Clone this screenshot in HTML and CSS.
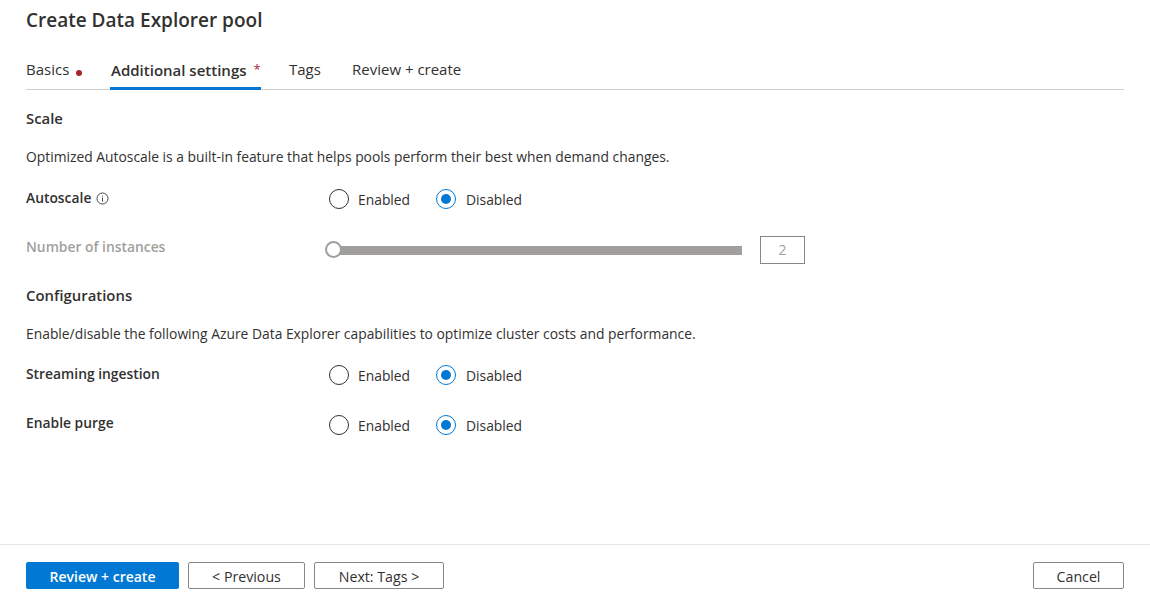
FILE: index.html
```html
<!DOCTYPE html>
<html lang="en">
<head>
  <meta charset="UTF-8">
  <title>Create Data Explorer pool</title>
  <link rel="stylesheet" href="styles.css">
</head>
<body>
  <div class="page">
    <main class="content">
      <h1 class="title">Create Data Explorer pool</h1>

      <nav class="tabs">
        <a class="tab tab-basics">Basics <span class="dot"></span></a>
        <a class="tab tab-active">Additional settings <span class="star">*</span></a>
        <a class="tab tab-tags">Tags</a>
        <a class="tab tab-review">Review + create</a>
      </nav>

      <h2 class="section-head head-scale">Scale</h2>
      <p class="desc desc-scale">Optimized Autoscale is a built-in feature that helps pools perform their best when demand changes.</p>

      <div class="row row-autoscale">
        <div class="label label-autoscale">Autoscale
          <svg class="info" width="13" height="13" viewBox="0 0 13 13">
            <circle cx="6.5" cy="6.5" r="5.5" fill="none" stroke="#484644" stroke-width="1"/>
            <rect x="6" y="5.5" width="1" height="4" fill="#484644"/>
            <rect x="6" y="3.5" width="1" height="1" fill="#484644"/>
          </svg>
        </div>
        <div class="radios">
          <span class="radio"></span><span class="radio-text">Enabled</span>
          <span class="radio checked"></span><span class="radio-text">Disabled</span>
        </div>
      </div>

      <div class="row row-instances">
        <div class="label label-off">Number of instances</div>
        <div class="slider">
          <div class="track"></div>
          <span class="thumb"></span>
        </div>
        <div class="count">2</div>
      </div>

      <h2 class="section-head head-config">Configurations</h2>
      <p class="desc desc-config">Enable/disable the following Azure Data Explorer capabilities to optimize cluster costs and performance.</p>

      <div class="row row-streaming">
        <div class="label label-up">Streaming ingestion</div>
        <div class="radios">
          <span class="radio"></span><span class="radio-text">Enabled</span>
          <span class="radio checked"></span><span class="radio-text">Disabled</span>
        </div>
      </div>

      <div class="row row-purge">
        <div class="label label-purge">Enable purge</div>
        <div class="radios">
          <span class="radio"></span><span class="radio-text">Enabled</span>
          <span class="radio checked"></span><span class="radio-text">Disabled</span>
        </div>
      </div>
    </main>

    <footer class="footer">
      <button class="btn btn-primary">Review + create</button>
      <button class="btn btn-prev">&lt; Previous</button>
      <button class="btn btn-next">Next: Tags &gt;</button>
      <button class="btn btn-cancel">Cancel</button>
    </footer>
  </div>
</body>
</html>
```

FILE: styles.css
```css
* {
  box-sizing: border-box;
}
html, body {
  height: 100%;
}
body {
  margin: 0;
  background: #fff;
  color: #323130;
  font-family: "Open Sans", "Noto Sans", Arial, sans-serif;
  font-size: 13.85px;
  overflow: hidden;
}
.page {
  height: 603px;
  display: flex;
  flex-direction: column;
}
.content {
  flex: 1;
  padding: 0 26px;
}
.title {
  margin: 0;
  padding-top: 8px;
  font-size: 19px;
  line-height: 24px;
  font-weight: 600;
}
.tabs {
  display: flex;
  height: 58px;
  padding-top: 27px;
  border-bottom: 1px solid #d2d0ce;
}
.tab {
  display: block;
  line-height: 20px;
  font-size: 15px;
  white-space: nowrap;
  color: #323130;
}
.tab-basics {
  width: 84px;
}
.tab-active {
  width: 151px;
  height: 31px;
  margin-right: 28px;
  padding-left: 1px;
  font-weight: 600;
  border-bottom: 3px solid #0078d4;
}
.tab-tags {
  width: 63px;
}
.dot {
  display: inline-block;
  width: 6px;
  height: 6px;
  margin-left: 3px;
  border-radius: 50%;
  background: #a4262c;
  vertical-align: -1px;
}
.star {
  margin-left: 3px;
  color: #a4262c;
  font-weight: 400;
  font-size: 13px;
  vertical-align: 2px;
}
.section-head {
  margin: 0;
  font-size: 14.9px;
  line-height: 20px;
  font-weight: 600;
}
.head-scale {
  margin-top: 18px;
}
.head-config {
  margin-top: 21px;
}
.desc {
  margin: 18px 0 0;
  line-height: 20px;
}
.desc-scale,
.desc-config {
  margin-top: 19px;
}
.row {
  display: flex;
  align-items: center;
  height: 24px;
}
.row-autoscale {
  margin-top: 20px;
}
.row-instances {
  margin-top: 25px;
  height: 28px;
}
.row-streaming {
  margin-top: 19px;
}
.row-purge {
  margin-top: 26px;
}
.label {
  width: 302px;
  font-weight: 600;
  display: flex;
  align-items: center;
  gap: 5px;
}
.label-autoscale {
  margin-top: -4px;
}
.label-off {
  margin-top: -8px;
  color: #a19f9d;
}
.label-up {
  margin-top: -4px;
}
.label-purge {
  margin-top: -6px;
}
.info {
  margin-top: 3px;
}
.radios {
  display: flex;
  align-items: center;
}
.radio {
  width: 20px;
  height: 20px;
  margin-left: 1px;
  border: 1px solid #323130;
  border-radius: 50%;
  background: #fff;
  position: relative;
}
.radio.checked {
  border-color: #0078d4;
}
.radio.checked::after {
  content: "";
  position: absolute;
  left: 4px;
  top: 4px;
  width: 10px;
  height: 10px;
  border-radius: 50%;
  background: #0078d4;
}
.radio-text {
  margin-left: 9px;
  width: 77px;
}
.radio-text:last-child {
  margin-left: 10px;
  width: auto;
}
.slider {
  position: relative;
  width: 414px;
  height: 18px;
  display: flex;
  align-items: center;
}
.track {
  width: 100%;
  height: 9px;
  background: #a19f9d;
}
.thumb {
  position: absolute;
  left: -3px;
  top: 0;
  width: 17px;
  height: 17px;
  border: 2px solid #a19f9d;
  border-radius: 50%;
  background: #fff;
}
.count {
  width: 45px;
  height: 28px;
  margin-left: 18px;
  border: 1px solid #8a8886;
  color: #a19f9d;
  text-align: center;
  line-height: 26px;
}
.footer {
  display: flex;
  align-items: flex-start;
  height: 59px;
  padding: 17px 26px 0;
  border-top: 1px solid #e5e5e5;
}
.btn {
  height: 27px;
  padding: 1px 0 0;
  background: #fff;
  border: 1px solid #8a8886;
  border-radius: 2px;
  color: #323130;
  font: inherit;
  font-size: 14.2px;
}
.btn-primary {
  width: 153px;
  background: #0078d4;
  border-color: #0078d4;
  color: #fff;
  font-weight: 600;
  font-size: 14px;
}
.btn-prev {
  width: 117px;
  margin-left: 9px;
}
.btn-next {
  width: 130px;
  margin-left: 9px;
}
.btn-cancel {
  width: 91px;
  margin-left: auto;
}
```
